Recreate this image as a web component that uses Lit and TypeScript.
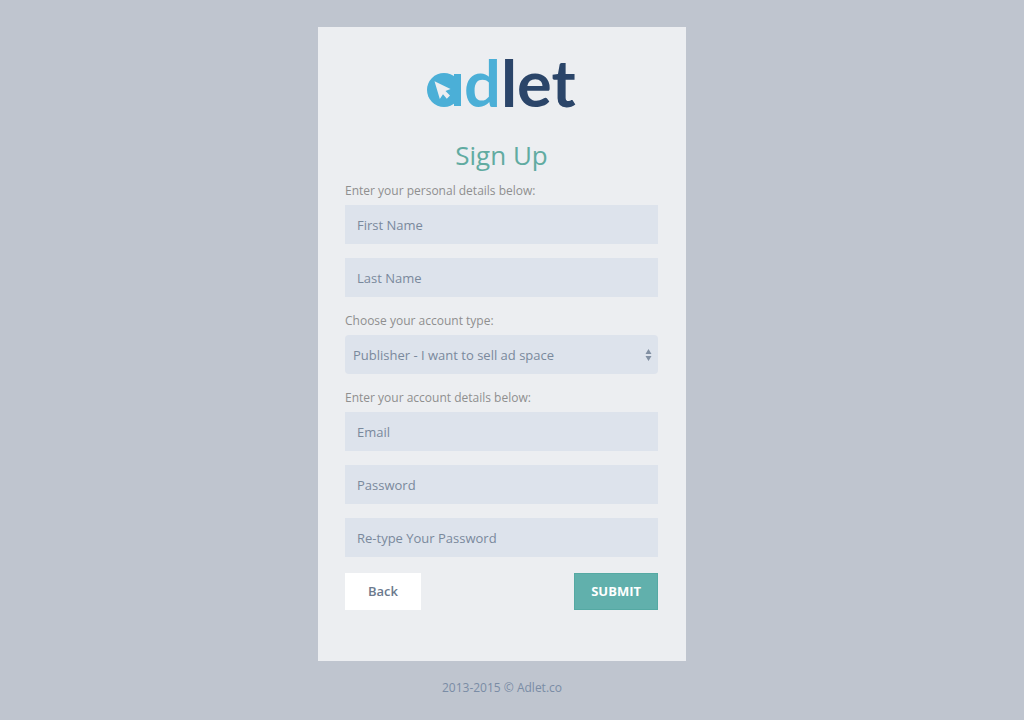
import { LitElement, html, css } from "lit";
import { customElement, state } from "lit/decorators.js";

@customElement("adlet-logo")
export class AdletLogo extends LitElement {
  static styles = css`
    :host { display: block; line-height: 0; }
    .word { font-family: Lato, "Open Sans", sans-serif; font-size: 65px; font-weight: 700; }
    .sky { fill: #4bafd7; }
    .navy { fill: #2b4569; }
    .pointer { fill: #eceef1; }
  `;

  render() {
    return html`
      <svg width="150" height="80" viewBox="0 -18 150 80" role="img" aria-label="adlet">
        <circle class="sky" cx="17" cy="30" r="17"></circle>
        <rect class="sky" x="27" y="14" width="7" height="32"></rect>
        <path class="pointer" d="M7.5 21.3 L23.5 29 L18.5 31 L23 35.5 L19.8 38.8 L16 34.3 L12.8 39 Z"></path>
        <text class="word" x="37" y="47"><tspan class="sky">d</tspan><tspan class="navy">let</tspan></text>
      </svg>
    `;
  }
}

@customElement("app-root")
export class AppRoot extends LitElement {
  static styles = css`
    :host {
      display: block;
      box-sizing: border-box;
      min-height: 100vh;
      padding: 27px 20px 20px 0;
      background: #bfc5cf;
      font-family: "Open Sans", sans-serif;
      font-size: 12px;
      line-height: 18px;
    }
    * { box-sizing: border-box; }
    .card {
      max-width: 368px;
      margin: 0 auto;
      padding: 15px 28px 51px 27px;
      background: #eceef1;
    }
    .logo { display: flex; justify-content: center; }
    .title {
      margin: 14px 0 8px;
      color: #61aba1;
      font-size: 26px;
      font-weight: 400;
      line-height: 38px;
      text-align: center;
    }
    .form { display: flex; flex-direction: column; gap: 15px; }
    .group { display: flex; flex-direction: column; gap: 14px; }
    .hint { margin: 0 0 -9px; color: #8f8f8f; }
    .field {
      width: 100%;
      height: 39px;
      padding: 0 12px;
      border: 0;
      border-radius: 0;
      background: #dde3ec;
      color: #7a899c;
      font: inherit;
      font-size: 13px;
      outline: 0;
    }
    .field::placeholder { color: #7a899c; opacity: 1; }
    .field:focus { background: #d5dce7; }
    .select { position: relative; }
    .select .field { display: block; padding: 0 24px 0 8px; border-radius: 4px; appearance: none; }
    .arrows { position: absolute; top: 14px; right: 6px; fill: #8290a3; pointer-events: none; }
    .actions { display: flex; justify-content: space-between; padding-top: 1px; }
    .button {
      height: 37px;
      border: 0;
      font: inherit;
      font-size: 13px;
      font-weight: 600;
      cursor: pointer;
    }
    .back { padding: 0 23px 2px; background: #fff; color: #6c7a8d; }
    .submit { padding: 0 16px 2px; border: 1px solid #55a9a3; background: #61b0ac; color: #fff; font-weight: 700; text-transform: uppercase; }
    .footer { padding-top: 18px; color: #7a8ca5; text-align: center; }
  `;

  @state() private accountType = "publisher";

  private field(id: string, label: string, type = "text") {
    return html`<input class="field" id=${id} name=${id} type=${type} placeholder=${label} aria-label=${label} />`;
  }

  render() {
    return html`
      <main class="card">
        <div class="logo"><adlet-logo></adlet-logo></div>
        <h1 class="title">Sign Up</h1>
        <form class="form" @submit=${(e: Event) => e.preventDefault()}>
          <div class="group" role="group" aria-labelledby="personal">
            <p class="hint" id="personal">Enter your personal details below:</p>
            ${this.field("first-name", "First Name")}
            ${this.field("last-name", "Last Name")}
          </div>
          <div class="group">
            <label class="hint" for="account-type">Choose your account type:</label>
            <div class="select">
              <select
                class="field"
                id="account-type"
                .value=${this.accountType}
                @change=${(e: Event) => (this.accountType = (e.target as HTMLSelectElement).value)}
              >
                <option value="publisher">Publisher - I want to sell ad space</option>
              </select>
              <svg class="arrows" width="7" height="12" viewBox="0 0 7 12" aria-hidden="true">
                <path d="M3.5 0 L6.5 5 H0.5 Z M0.5 7 H6.5 L3.5 12 Z"></path>
              </svg>
            </div>
          </div>
          <div class="group" role="group" aria-labelledby="account">
            <p class="hint" id="account">Enter your account details below:</p>
            ${this.field("email", "Email", "email")}
            ${this.field("password", "Password", "password")}
            ${this.field("confirm", "Re-type Your Password", "password")}
          </div>
          <div class="actions">
            <button class="button back" type="button">Back</button>
            <button class="button submit" type="submit">Submit</button>
          </div>
        </form>
      </main>
      <footer class="footer">2013-2015 © Adlet.co</footer>
    `;
  }
}
